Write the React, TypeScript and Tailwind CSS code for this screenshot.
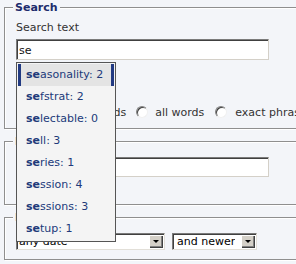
import React from 'react';

const SUGGESTIONS = [
  { rest: 'asonality', count: 2 },
  { rest: 'fstrat', count: 2 },
  { rest: 'lectable', count: 0 },
  { rest: 'll', count: 3 },
  { rest: 'ries', count: 1 },
  { rest: 'ssion', count: 4 },
  { rest: 'ssions', count: 3 },
  { rest: 'tup', count: 1 },
];

function TextBox({ value, className }: { value?: string; className?: string }) {
  return (
    <div
      className={`flex items-center border border-t-[#7b7b7b] border-l-[#7b7b7b] border-r-[#d4d0c8] border-b-[#d4d0c8] bg-white pl-[2px] pt-[2px] text-[#111] shadow-[inset_1px_1px_0_#404040] ${className ?? ''}`}
    >
      {value}
    </div>
  );
}

function Radio({ className }: { className?: string }) {
  return (
    <span
      className={`block h-[12px] w-[12px] shrink-0 rounded-full border border-t-[#808080] border-l-[#808080] border-r-[#f0f0f0] border-b-[#f0f0f0] bg-white shadow-[inset_1px_1px_0_#404040] ${className ?? ''}`}
    />
  );
}

function Select({ label, width, textPad }: { label: string; width: string; textPad: string }) {
  return (
    <div
      className={`flex h-[17px] items-center justify-between border border-t-[#7b7b7b] border-l-[#7b7b7b] border-r-[#e2dfd8] border-b-[#e2dfd8] bg-white p-[1px] shadow-[inset_1px_1px_0_#404040] ${width}`}
    >
      <span className={`truncate leading-[13px] text-black ${textPad}`}>{label}</span>
      <span className="flex h-[13px] w-[14px] shrink-0 items-center justify-center bg-[#d4d0c8] shadow-[inset_1px_1px_0_#fff,inset_-1px_-1px_0_#404040,inset_-2px_-2px_0_#808080]">
        <span className="block h-0 w-0 border-x-[3px] border-t-[3px] border-x-transparent border-t-black" />
      </span>
    </div>
  );
}

const fieldset =
  'border border-[#8f8f8f] px-[11px] shadow-[inset_1px_1px_0_#fff,1px_1px_0_#fff]';
const legend = '-ml-[3px] bg-[#f3f5f9] px-[2px] font-bold text-[#1d2c6c]';

export default function App() {
  return (
    <div className="relative h-[264px] w-[296px] overflow-hidden bg-[#f3f5f9] font-['DejaVu_Sans',sans-serif] text-[11px] leading-[15px] text-[#333]">
      <div className="w-[330px] pl-[4px]">
        {/* Search */}
        <fieldset className={`h-[129px] ${fieldset}`}>
          <legend className={legend}>Search</legend>
          <div className="pt-[5px]">Search text</div>
          <TextBox value="se" className="mt-[4px] h-[21px] w-[253px]" />
          <div className="mt-[23px]">Match</div>
          <div className="mt-[6px] flex h-[16px] items-center whitespace-nowrap">
            <Radio />
            <span className="ml-[6px]">any of the words</span>
            <Radio className="ml-[10px]" />
            <span className="ml-[7px]">all words</span>
            <Radio className="ml-[11px]" />
            <span className="ml-[8px]">exact phrase</span>
          </div>
        </fieldset>

        {/* Name */}
        <fieldset className={`mt-[5px] h-[71px] ${fieldset}`}>
          <legend className={legend}>Name</legend>
          <TextBox className="mt-[8px] h-[20px] w-[253px]" />
          <div className="mt-[4px]">(e.g. Smith J. etc)</div>
        </fieldset>

        {/* Date */}
        <fieldset className={`mt-[5px] h-[50px] ${fieldset}`}>
          <legend className={legend}>Date</legend>
          <div className="mt-[8px] flex gap-[7px]">
            <Select label="any date" width="w-[149px]" textPad="pl-[1px]" />
            <Select label="and newer" width="w-[85px]" textPad="pl-[3px]" />
          </div>
        </fieldset>
      </div>

      {/* autocomplete list */}
      <ul className="absolute left-[16px] top-[62px] z-10 w-[100px] border border-[#555] bg-[#f4f4f4] p-px text-[#213a7a]">
        {SUGGESTIONS.map((s, i) => (
          <li
            key={s.rest}
            className={`h-[22px] whitespace-nowrap border-x-[3px] pl-[5px] leading-[22px] ${
              i === 0 ? 'border-[#223a82] bg-[#e4e4e4]' : 'border-transparent'
            }`}
          >
            <b>se</b>
            {s.rest}: {s.count}
          </li>
        ))}
      </ul>
    </div>
  );
}
